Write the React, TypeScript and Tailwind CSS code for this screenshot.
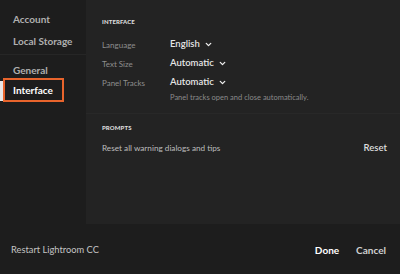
import { ChevronDown } from 'lucide-react';

const font = { fontFamily: 'Lato, "Liberation Sans", Arial, sans-serif' };

function Row({ label, value }: { label: string; value: string }) {
    return (
        <div className="flex items-center h-[19px]">
            <div className="w-[68px] text-[8px] text-[#8e8e8e]">{label}</div>
            <div className="flex items-center gap-[4px] text-[9.5px] font-semibold text-[#e6e6e6]">
                {value}
                <ChevronDown size={9} strokeWidth={3.5} className="text-[#f0f0f0]" />
            </div>
        </div>
    );
}

export default function App() {
    return (
        <div className="w-[400px] h-[274px] flex flex-col bg-[#1d1d1d] overflow-hidden" style={font}>
            <div className="flex h-[224px]">
                <aside className="w-[86px] shrink-0 flex flex-col">
                    <div className="pt-[12px] pl-[13px] text-[10px] font-bold text-[#b0b0b0] space-y-[8px]">
                        <div className="h-[14px] leading-[14px]">Account</div>
                        <div className="h-[14px] leading-[14px]">Local Storage</div>
                    </div>
                    <div className="mt-[6px] h-px bg-[#262626]" />
                    <div className="pt-[6px] pl-[13px] text-[10px] font-bold text-[#b0b0b0] h-[23px] leading-[14px] flex items-center">General</div>
                    <div className="relative ml-[3px] w-[61px] h-[24px] border-2 border-[#e8642c] flex items-center pl-[8px] text-[10px] font-bold text-white">
                        Interface
                        <span className="absolute -left-[5px] top-[1px] w-[3px] h-[20px] bg-[#e8e8e8]" />
                    </div>
                </aside>
                <main className="flex-1 bg-[#232323] flex flex-col">
                    <section className="px-[16px] pt-[18px]">
                        <div className="text-[6px] font-black text-[#dcdcdc] tracking-[0.1px] h-[8px] leading-[8px]">INTERFACE</div>
                        <div className="mt-[9px]">
                            <Row label="Language" value="English" />
                            <Row label="Text Size" value="Automatic" />
                            <Row label="Panel Tracks" value="Automatic" />
                        </div>
                        <div className="pl-[68px] text-[7.5px] text-[#8a8a8a] h-[12px] leading-[12px]">Panel tracks open and close automatically.</div>
                    </section>
                    <div className="mt-[9px] h-px bg-[#282828]" />
                    <section className="px-[16px] pt-[10px] pr-[13px]">
                        <div className="text-[6px] font-black text-[#dcdcdc] tracking-[0.1px] h-[8px] leading-[8px]">PROMPTS</div>
                        <div className="mt-[9px] flex items-center justify-between h-[14px]">
                            <span className="text-[8.2px] text-[#bdbdbd]">Reset all warning dialogs and tips</span>
                            <button className="text-[9.5px] font-semibold text-[#dedede]">Reset</button>
                        </div>
                    </section>
                </main>
            </div>
            <footer className="flex-1 flex items-center pl-[11px] pr-[14px] pt-[2px]">
                <span className="text-[9.3px] text-[#c4c4c4]">Restart Lightroom CC</span>
                <div className="ml-auto flex items-center gap-[17px] text-[10px] font-bold">
                    <button className="text-white">Done</button>
                    <button className="text-[#d0d0d0]">Cancel</button>
                </div>
            </footer>
        </div>
    );
}
